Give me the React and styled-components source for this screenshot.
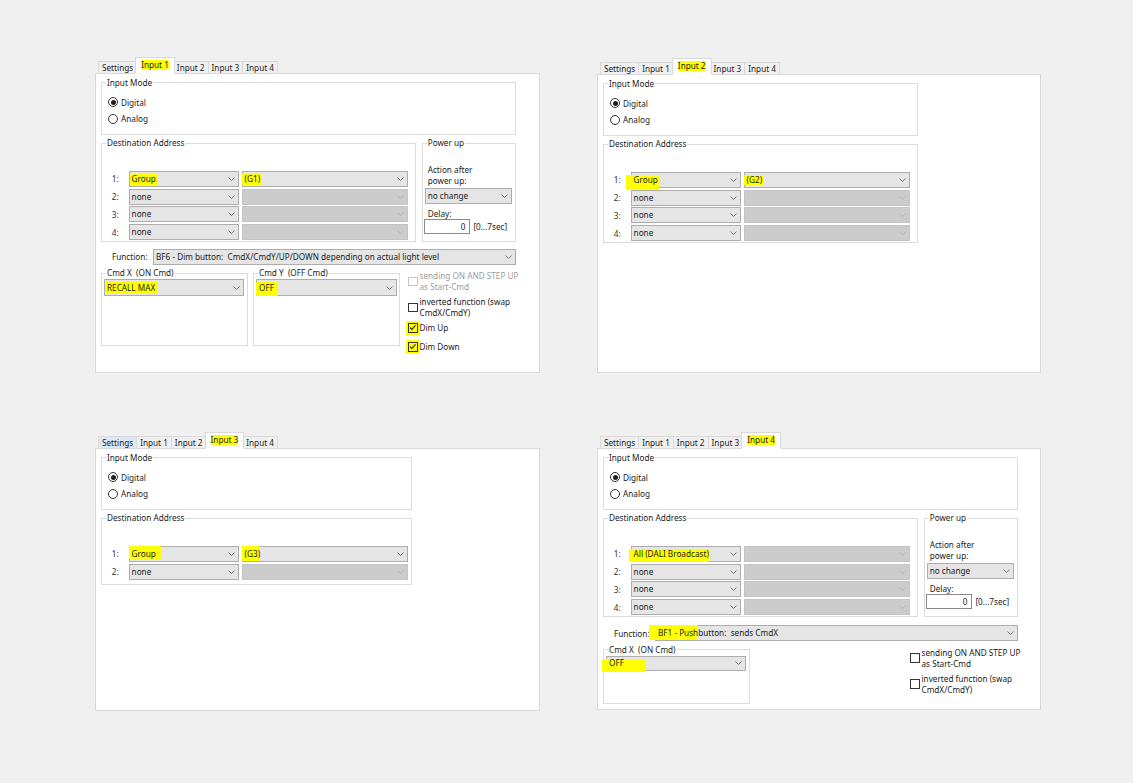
import React from 'react';
import styled, { createGlobalStyle } from 'styled-components';

const GlobalStyle = createGlobalStyle`
  html, body { margin: 0; padding: 0; background: #f0f0f0; }
  body { font-family: "Noto Sans", "Liberation Sans", sans-serif; }
  *, *::before, *::after { box-sizing: border-box; }
`;

const Page = styled.div`
  width: 1133px;
  height: 783px;
  background: #f0f0f0;
  display: grid;
  grid-template-columns: 445px 444px;
  grid-template-rows: 315px 278px;
  column-gap: 57px;
  row-gap: 60px;
  padding: 58.3px 0 0 95px;
  font-size: 8.2px;
  color: #1b1b1b;
  overflow: hidden;
`;

const Window = styled.div`
  display: flex;
  flex-direction: column;
  align-self: start;
  margin-top: ${p => p.$dy || 0}px;
`;

const TabStrip = styled.div`
  display: flex;
  align-items: flex-end;
  height: 16px;
  padding-left: 3px;
  margin-bottom: -1px;
  position: relative;
  z-index: 1;
`;

const Tab = styled.div`
  position: relative;
  z-index: ${p => (p.$active ? 2 : 1)};
  display: flex;
  align-items: center;
  height: ${p => (p.$active ? 17 : 13)}px;
  padding: ${p => (p.$active ? '0 5px 2px' : '0 3px')};
  margin-right: ${p => (p.$active ? -2 : -1)}px;
  margin-left: ${p => (p.$active ? -1 : 0)}px;
  border: 1px solid #d9d9d9;
  border-bottom-color: ${p => (p.$active ? '#ffffff' : '#d9d9d9')};
  background: ${p => (p.$active ? '#ffffff' : p.$hover ? '#d9e9f8' : '#f0f0f0')};
  white-space: nowrap;
  line-height: 10px;
`;

const Body = styled.div`
  position: relative;
  z-index: 0;
  height: ${p => p.$h}px;
  background: #ffffff;
  border: 1px solid #d9d9d9;
  padding: 3.4px 0 0 5px;
  display: flex;
  flex-direction: column;
`;

const Marker = styled.span`
  position: relative;
  z-index: 0;
  &::before {
    content: '';
    position: absolute;
    z-index: -1;
    top: ${p => -(p.$t || 0)}px;
    right: ${p => -(p.$r || 0)}px;
    bottom: ${p => -(p.$b || 0)}px;
    left: ${p => -(p.$l || 0)}px;
    background: #ffff00;
    border-radius: 1px;
  }
`;

const Group = styled.fieldset`
  margin: 0;
  padding: 0;
  min-width: 0;
  flex: none;
  width: ${p => p.$w}px;
  height: ${p => p.$h}px;
  border: 1px solid #dcdcdc;
`;

const Legend = styled.legend`
  padding: 0 1px;
  margin-left: 4px;
  line-height: 10px;
  white-space: nowrap;
`;

const GroupRow = styled.div`
  display: flex;
  gap: 5.7px;
  margin-top: ${p => p.$mt || 0}px;
`;

const RadioList = styled.div`
  display: flex;
  flex-direction: column;
  padding: 6.6px 0 0 6px;
`;

const RadioRow = styled.div`
  display: flex;
  align-items: center;
  gap: 3px;
  height: 16.3px;
`;

const RadioCircle = styled.span`
  width: 10px;
  height: 10px;
  border-radius: 50%;
  border: 1px solid #333333;
  background: #ffffff;
  display: flex;
  align-items: center;
  justify-content: center;
  flex: none;
  &::after {
    content: '';
    display: ${p => (p.$on ? 'block' : 'none')};
    width: 5px;
    height: 5px;
    border-radius: 50%;
    background: #1f1f1f;
  }
`;

const AddressRows = styled.div`
  display: grid;
  grid-template-columns: 14.6px 110.7px 166.7px;
  grid-auto-rows: 16px;
  column-gap: 2.3px;
  row-gap: 1.7px;
  padding: 22.8px 0 0 9.7px;
`;

const RowLabel = styled.span`
  display: flex;
  align-items: center;
  color: #333333;
`;

const ComboBox = styled.div`
  display: flex;
  align-items: center;
  gap: 4px;
  width: ${p => (p.$w ? `${p.$w}px` : 'auto')};
  flex: ${p => (p.$w ? 'none' : '1')};
  height: ${p => p.$h || 16}px;
  padding: 0 3px 0 2px;
  border: 1px solid ${p => (p.$disabled ? '#c4c4c4' : '#adadad')};
  background: ${p => (p.$disabled ? '#cccccc' : '#e5e5e5')};
  white-space: nowrap;
  line-height: 10px;
`;

const ComboText = styled.span`
  flex: 1;
  min-width: 0;
`;

const Chevron = ({ disabled }) => (
  <svg width="7" height="4" viewBox="0 0 7 4" style={{ flex: 'none' }}>
    <polyline
      points="0.5,0.5 3.5,3.5 6.5,0.5"
      fill="none"
      stroke={disabled ? '#b0b0b0' : '#6a6a6a'}
      strokeWidth="0.9"
    />
  </svg>
);

const Combo = ({ children, disabled, w, h }) => (
  <ComboBox $disabled={disabled} $w={w} $h={h}>
    <ComboText>{children}</ComboText>
    <Chevron disabled={disabled} />
  </ComboBox>
);

const PowerContent = styled.div`
  display: flex;
  flex-direction: column;
  padding: 15.5px 0 0 2px;
`;

const PowerText = styled.div`
  padding-left: 3px;
  line-height: 11.5px;
  margin-top: ${p => p.$mt || 0}px;
`;

const DelayRow = styled.div`
  display: flex;
  align-items: center;
  gap: 3px;
  margin-left: -1px;
`;

const NumberBox = styled.div`
  width: 46.7px;
  height: 15.3px;
  border: 1px solid #8a8a8a;
  background: #ffffff;
  text-align: right;
  padding-right: 4px;
  line-height: 13px;
`;

const FunctionRow = styled.div`
  display: flex;
  align-items: center;
  width: 415px;
  height: 16px;
  margin-top: ${p => p.$mt}px;
  padding-left: 11px;
`;

const FunctionLabel = styled.span`
  width: 41px;
  flex: none;
`;

const CmdArea = styled.div`
  display: grid;
  grid-template-columns: 147px 147px auto;
  column-gap: 5px;
  align-items: start;
  margin-top: ${p => p.$mt}px;
`;

const CmdInner = styled.div`
  padding: 1px 0 0 2px;
`;

const CheckList = styled.div`
  grid-column: 3;
  display: flex;
  flex-direction: column;
  margin: 2.3px 0 0 3px;
`;

const CheckItem = styled.div`
  display: flex;
  align-items: center;
  height: ${p => p.$h}px;
  margin-bottom: ${p => p.$mb || 0}px;
  line-height: 11px;
  color: ${p => (p.$disabled ? '#9c9c9c' : '#1b1b1b')};
`;

const CheckBox = styled.span`
  width: 9.5px;
  height: 9.5px;
  flex: none;
  margin-right: 2px;
  border: 1px solid ${p => (p.$disabled ? '#c6c6c6' : '#333333')};
  background: ${p => (p.$hl ? '#ffff00' : '#ffffff')};
  box-shadow: ${p => (p.$hl ? '0 0 0 2px #ffff00' : 'none')};
  display: flex;
  align-items: center;
  justify-content: center;
`;

const Check = ({ checked, disabled, hl, h, mb, children }) => (
  <CheckItem $h={h} $mb={mb} $disabled={disabled}>
    <CheckBox $disabled={disabled} $hl={hl}>
      {checked && (
        <svg width="8" height="7" viewBox="0 0 8 7">
          <polyline points="1,3.6 3,5.6 7,1.2" fill="none" stroke="#202020" strokeWidth="1.1" />
        </svg>
      )}
    </CheckBox>
    <span>{children}</span>
  </CheckItem>
);

const TABS = ['Settings', 'Input 1', 'Input 2', 'Input 3', 'Input 4'];

const Tabs = ({ active, hover, mark }) => (
  <TabStrip>
    {TABS.map((t, i) => (
      <Tab key={t} $active={i === active} $hover={i === hover}>
        {i === active ? <Marker {...mark}>{t}</Marker> : t}
      </Tab>
    ))}
  </TabStrip>
);

const InputMode = ({ w }) => (
  <Group $w={w} $h={57}>
    <Legend>Input Mode</Legend>
    <RadioList>
      <RadioRow>
        <RadioCircle $on />
        <span>Digital</span>
      </RadioRow>
      <RadioRow>
        <RadioCircle />
        <span>Analog</span>
      </RadioRow>
    </RadioList>
  </Group>
);

const Destination = ({ w, h, rows }) => (
  <Group $w={w} $h={h}>
    <Legend>Destination Address</Legend>
    <AddressRows>
      {rows.map((r, i) => (
        <React.Fragment key={i}>
          <RowLabel>{i + 1}:</RowLabel>
          <Combo>{r.a}</Combo>
          <Combo disabled={!r.b}>{r.b}</Combo>
        </React.Fragment>
      ))}
    </AddressRows>
  </Group>
);

const PowerUp = () => (
  <Group $w={94.3} $h={104}>
    <Legend>Power up</Legend>
    <PowerContent>
      <PowerText>
        Action after
        <br />
        power up:
      </PowerText>
      <ComboBox $w={87} $h={15.7} style={{ marginTop: 1.8 }}>
        <ComboText>no change</ComboText>
        <Chevron />
      </ComboBox>
      <PowerText $mt={3.5}>Delay:</PowerText>
      <DelayRow>
        <NumberBox>0</NumberBox>
        <span>[0...7sec]</span>
      </DelayRow>
    </PowerContent>
  </Group>
);

const noneRow = { a: 'none', b: null };

export default function App() {
  return (
    <>
      <GlobalStyle />
      <Page>
        {/* Panel 1 */}
        <Window>
          <Tabs active={1} mark={{ t: 0.7, r: 1, b: 0.7, l: 0 }} />
          <Body $h={300}>
            <InputMode w={415} />
            <GroupRow $mt={3.5}>
              <Destination
                w={315}
                h={104}
                rows={[
                  {
                    a: <Marker $t={-1} $r={2} $b={1.5} $l={2}>Group</Marker>,
                    b: <Marker $t={-0.5} $r={1} $b={1} $l={2.5}>(G1)</Marker>,
                  },
                  noneRow,
                  noneRow,
                  noneRow,
                ]}
              />
              <PowerUp />
            </GroupRow>
            <FunctionRow $mt={6.7}>
              <FunctionLabel>Function:</FunctionLabel>
              <Combo>BF6 - Dim button:&nbsp; CmdX/CmdY/UP/DOWN depending on actual light level</Combo>
            </FunctionRow>
            <CmdArea $mt={3.2}>
              <Group $w={147} $h={78}>
                <Legend>Cmd X&nbsp; (ON Cmd)</Legend>
                <CmdInner>
                  <Combo w={140} h={17}>
                    <Marker $t={1} $r={3} $b={1.5} $l={2}>RECALL MAX</Marker>
                  </Combo>
                </CmdInner>
              </Group>
              <Group $w={147} $h={78}>
                <Legend>Cmd Y&nbsp; (OFF Cmd)</Legend>
                <CmdInner>
                  <Combo w={141} h={17}>
                    <Marker $t={-0.5} $r={4} $b={3.5} $l={3}>OFF</Marker>
                  </Combo>
                </CmdInner>
              </Group>
              <CheckList>
                <Check disabled h={22} mb={4}>
                  sending ON AND STEP UP
                  <br />
                  as Start-Cmd
                </Check>
                <Check h={22}>
                  inverted function (swap
                  <br />
                  CmdX/CmdY)
                </Check>
                <Check checked hl h={19}>
                  Dim Up
                </Check>
                <Check checked hl h={19}>
                  Dim Down
                </Check>
              </CheckList>
            </CmdArea>
          </Body>
        </Window>

        {/* Panel 2 */}
        <Window $dy={1}>
          <Tabs active={2} mark={{ t: -1, r: 0, b: 4.4, l: 7 }} />
          <Body $h={299}>
            <InputMode w={315} />
            <GroupRow $mt={3.5}>
              <Destination
                w={315}
                h={104}
                rows={[
                  {
                    a: <Marker $t={-1.4} $r={0.7} $b={4.7} $l={7.7}>Group</Marker>,
                    b: <Marker $t={-0.7} $r={1.7} $b={0.4} $l={2.7}>(G2)</Marker>,
                  },
                  noneRow,
                  noneRow,
                  noneRow,
                ]}
              />
            </GroupRow>
          </Body>
        </Window>

        {/* Panel 3 */}
        <Window>
          <Tabs active={3} hover={0} mark={{ t: 2, r: 5.7, b: 0.7, l: 3 }} />
          <Body $h={262.4}>
            <InputMode w={311} />
            <GroupRow $mt={3.5}>
              <Destination
                w={311}
                h={72.3}
                rows={[
                  {
                    a: <Marker $t={2.3} $r={5} $b={0} $l={3}>Group</Marker>,
                    b: <Marker $t={2} $r={0} $b={2} $l={2.7}>(G3)</Marker>,
                  },
                  noneRow,
                ]}
              />
            </GroupRow>
          </Body>
        </Window>

        {/* Panel 4 */}
        <Window>
          <Tabs active={4} mark={{ t: 2, r: 2.3, b: 4.7, l: 2.7 }} />
          <Body $h={262}>
            <InputMode w={415} />
            <GroupRow $mt={3.5}>
              <Destination
                w={315}
                h={104}
                rows={[
                  { a: <Marker $t={-0.7} $r={0} $b={3.4} $l={5}>All (DALI Broadcast)</Marker>, b: null },
                  noneRow,
                  noneRow,
                  noneRow,
                ]}
              />
              <PowerUp />
            </GroupRow>
            <FunctionRow $mt={8}>
              <FunctionLabel>Function:</FunctionLabel>
              <Combo>
                <Marker $t={2.7} $r={0} $b={2.3} $l={9.3}>BF1 - Push</Marker>
                button:&nbsp; sends CmdX
              </Combo>
            </FunctionRow>
            <CmdArea $mt={3.5}>
              <Group $w={147} $h={59}>
                <Legend>Cmd X&nbsp; (ON Cmd)</Legend>
                <CmdInner>
                  <Combo w={140} h={15.5}>
                    <Marker $t={-1.7} $r={22.3} $b={3.4} $l={6.6}>OFF</Marker>
                  </Combo>
                </CmdInner>
              </Group>
              <CheckList>
                <Check h={22} mb={4}>
                  sending ON AND STEP UP
                  <br />
                  as Start-Cmd
                </Check>
                <Check h={22}>
                  inverted function (swap
                  <br />
                  CmdX/CmdY)
                </Check>
              </CheckList>
            </CmdArea>
          </Body>
        </Window>
      </Page>
    </>
  );
}
